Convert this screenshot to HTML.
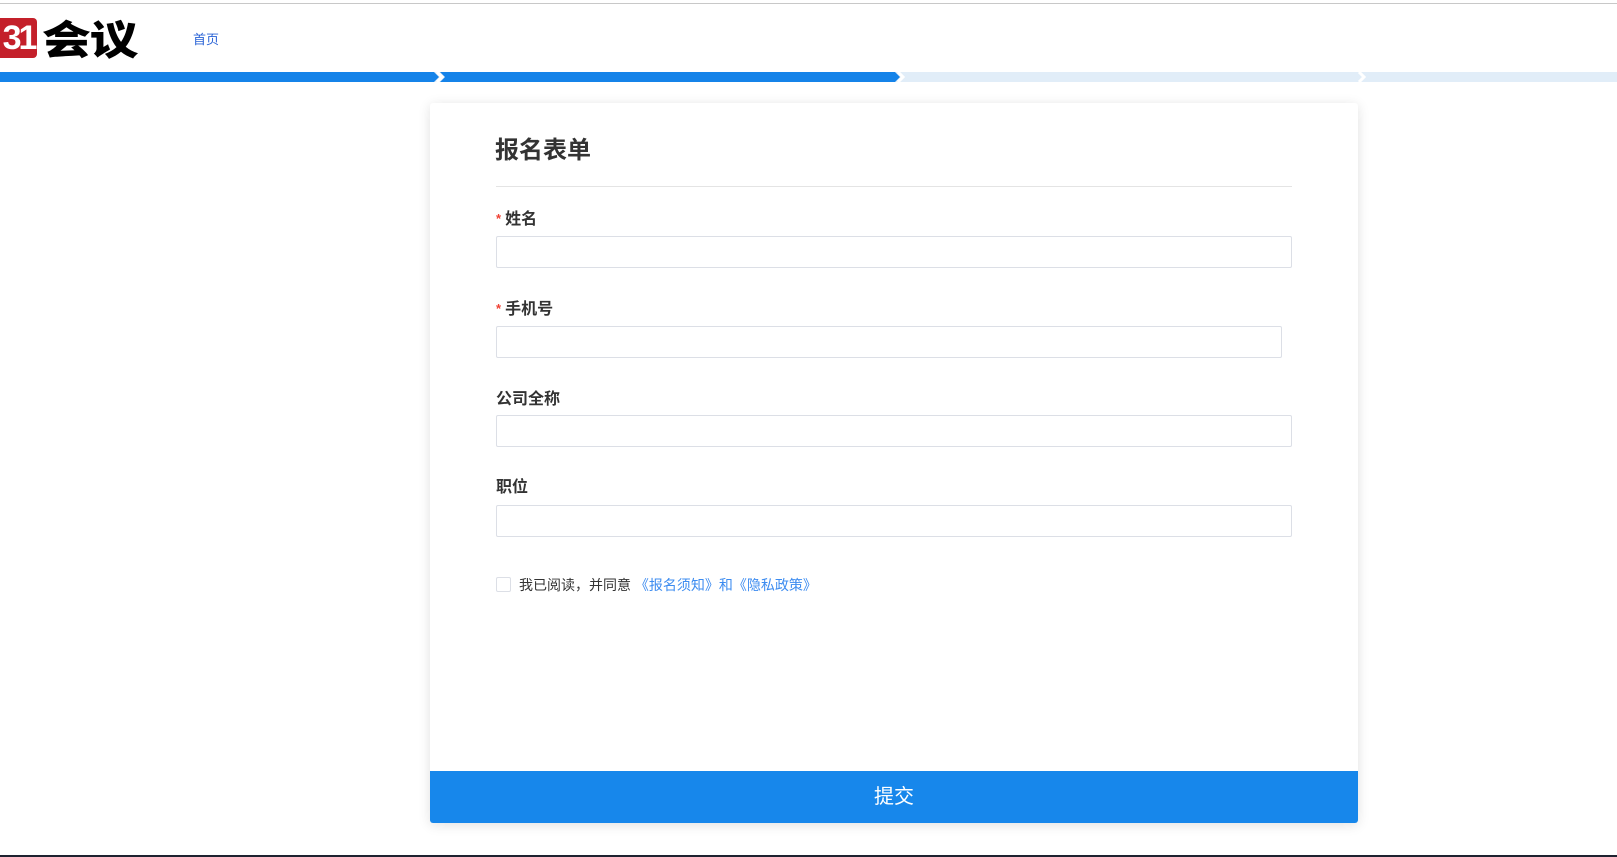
<!DOCTYPE html>
<html><head><meta charset="utf-8"><style>
*{margin:0;padding:0;box-sizing:border-box}
body{width:1617px;height:857px;position:relative;background:#fff;font-family:"Liberation Sans","Noto Sans CJK SC",sans-serif;overflow:hidden}
.abs{position:absolute}
.topline{left:0;top:3px;width:1617px;height:1px;background:#c8c8c8}
.card{left:430px;top:103px;width:928px;height:720px;background:#fff;box-shadow:0 2px 12px rgba(0,0,0,.12);border-radius:3px}
.lbl{font-size:16px;font-weight:bold;color:#333;left:496px}
.lbl .s{color:#f04134;font-size:13px;margin-right:4px;position:relative;top:-1px}
.inp{left:496px;width:796px;height:32px;border:1px solid #dcdfe6;border-radius:2px;background:#fff}
.btn{left:430px;top:771px;width:928px;height:52px;background:#1787eb;color:#fff;font-size:20px;text-align:center;line-height:52px;border-radius:0 0 3px 3px}
</style></head><body>
<div class="abs topline"></div>
<div class="abs" style="left:0;top:18px;width:37px;height:40px;background:#c4202a;border-radius:0 4px 4px 0;color:#fff;font:bold 34px/40px 'Liberation Sans',sans-serif;letter-spacing:-3px;text-align:center">31</div>
<div class="abs" style="left:42px;top:13px;font-size:40px;font-weight:900;color:#000;line-height:48px;letter-spacing:-1px;font-family:'Noto Sans CJK SC',sans-serif;transform:scaleX(1.22);transform-origin:0 0">会议</div>
<div class="abs" style="left:193px;top:29px;font-size:13px;color:#2a63d6">首页</div>
<svg class="abs" style="left:0;top:72px" width="1617" height="10">
<rect x="0" y="0" width="1617" height="10" fill="#e1edf8"/>
<polygon points="0,0 434,0 439,5 434,10 0,10" fill="#1583e9"/>
<polygon points="440,0 895,0 900,5 895,10 440,10 445,5" fill="#1583e9"/>
<polyline points="437,0 442,5 437,10" stroke="#fff" stroke-width="3" fill="none"/>
<polyline points="898,0 903,5 898,10" stroke="#fff" stroke-width="3" fill="none"/>
<polyline points="1359,0 1364,5 1359,10" stroke="#fff" stroke-width="3" fill="none"/>
</svg>
<div class="abs card"></div>
<div class="abs" style="left:495px;top:130px;font-size:24px;font-weight:bold;color:#333">报名表单</div>
<div class="abs" style="left:496px;top:186px;width:796px;height:1px;background:#e4e4e4"></div>
<div class="abs lbl" style="top:205px"><span class="s">*</span>姓名</div>
<div class="abs inp" style="top:236px"></div>
<div class="abs lbl" style="top:295px"><span class="s">*</span>手机号</div>
<div class="abs inp" style="top:326px;width:786px"></div>
<div class="abs lbl" style="top:385px">公司全称</div>
<div class="abs inp" style="top:415px"></div>
<div class="abs lbl" style="top:473px">职位</div>
<div class="abs inp" style="top:505px"></div>
<div class="abs" style="left:496px;top:577px;width:15px;height:15px;border:1px solid #dcdfe6;border-radius:2px"></div>
<div class="abs" style="left:519px;top:575px;font-size:14px;color:#333;white-space:nowrap">我已阅读，并同意 <span style="color:#3d8cf0">《报名须知》和《隐私政策》</span></div>
<div class="abs btn">提交</div>
<div class="abs" style="left:0;top:855px;width:1617px;height:2px;background:#1e2230"></div>
</body></html>
